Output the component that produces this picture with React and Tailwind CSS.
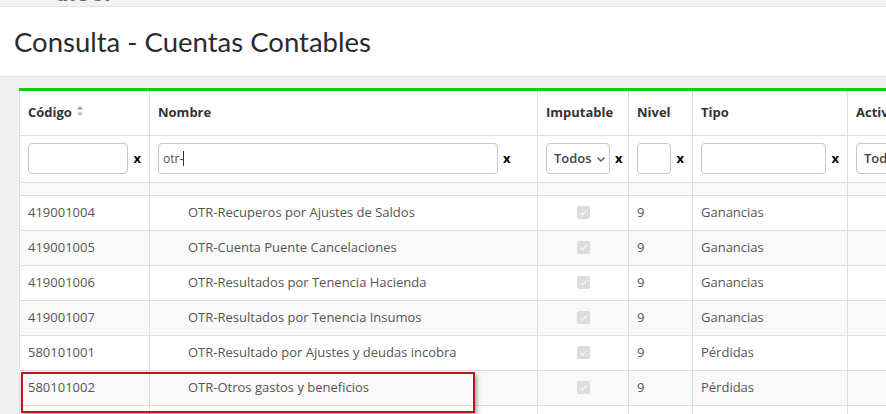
import React from "react";

const rows = [
  { code: "419001004", name: "OTR-Recuperos por Ajustes de Saldos", nivel: "9", tipo: "Ganancias" },
  { code: "419001005", name: "OTR-Cuenta Puente Cancelaciones", nivel: "9", tipo: "Ganancias" },
  { code: "419001006", name: "OTR-Resultados por Tenencia Hacienda", nivel: "9", tipo: "Ganancias" },
  { code: "419001007", name: "OTR-Resultados por Tenencia Insumos", nivel: "9", tipo: "Ganancias" },
  { code: "580101001", name: "OTR-Resultado por Ajustes y deudas incobra", nivel: "9", tipo: "Pérdidas" },
  { code: "580101002", name: "OTR-Otros gastos y beneficios", nivel: "9", tipo: "Pérdidas" },
  { code: "", name: "", nivel: "", tipo: "" },
];

const Clear = () => <span className="ml-[5px] text-[13px] font-bold text-black leading-none">x</span>;

const TextFilter = ({ width, value }) => (
  <div className="flex items-center">
    <div
      className={`${width} h-[31px] border border-[#c8c8c8] rounded-[4px] bg-white flex items-center px-[4px] text-[12px] text-[#555]`}
    >
      {value}
      {value && <span className="inline-block w-px h-[15px] bg-[#333]" />}
    </div>
    <Clear />
  </div>
);

const SelectFilter = ({ width }) => (
  <div className="flex items-center">
    <div
      className={`${width} h-[31px] border border-[#c8c8c8] rounded-[4px] bg-white flex items-center pl-[7px] pr-[3px] text-[13px] font-semibold text-[#444] overflow-hidden`}
    >
      <span className="flex-1 overflow-hidden whitespace-nowrap">Todos</span>
      <svg width="10" height="10" viewBox="0 0 10 10" className="shrink-0">
        <path d="M1.5 3.5 L5 7 L8.5 3.5" fill="none" stroke="#555" strokeWidth="1.4" />
      </svg>
    </div>
  </div>
);

const CheckDisabled = () => (
  <div className="w-[13px] h-[13px] rounded-[2px] bg-[#dcdcdc] flex items-center justify-center mx-auto">
    <svg width="9" height="9" viewBox="0 0 10 10">
      <path d="M1.5 5.2 L4 7.6 L8.6 2.4" fill="none" stroke="#f4f4f4" strokeWidth="1.6" />
    </svg>
  </div>
);

export default function App() {
  return (
    <div
      className="w-[886px] h-[414px] overflow-hidden bg-[#f1f1f1] text-[#555]"
      style={{ fontFamily: "'Open Sans', 'Liberation Sans', sans-serif" }}
    >
      {/* top strip with cut logo */}
      <div className="h-[7px] bg-[#f2f2f2] border-b border-[#e2e2e2] overflow-hidden">
        <div className="flex items-end ml-[51px] mt-[-17px] h-[22px]">
          <span className="w-[4px] h-[4px] rounded-full bg-[#22c822] mb-[6px] mr-[1px]" />
          <span
            className="text-[22px] font-bold text-[#666] leading-none tracking-[2px]"
            style={{ fontFamily: "Roboto, 'Liberation Sans', sans-serif" }}
          >
            aiser
          </span>
        </div>
      </div>

      {/* page header */}
      <div className="h-[70px] bg-white border-b border-[#e4e4e4] flex items-center pl-[14px]">
        <h1
          className="text-[27.5px] text-[#2b2b2b] font-normal leading-none"
          style={{ fontFamily: "Lato, 'Open Sans', sans-serif" }}
        >
          Consulta - Cuentas Contables
        </h1>
      </div>

      {/* table panel */}
      <div className="pt-[11px] pl-[19px]">
        <div className="relative w-[940px] bg-white border-t-[3px] border-[#0fd00f]">
          <table className="table-fixed border-collapse w-[940px] text-[13px]">
            <colgroup>
              <col className="w-[130px]" />
              <col className="w-[388px]" />
              <col className="w-[91px]" />
              <col className="w-[64px]" />
              <col className="w-[155px]" />
              <col className="w-[112px]" />
            </colgroup>
            <thead>
              <tr className="h-[44px] text-left text-[#333] font-bold">
                <th className="border border-t-0 border-[#dedede] px-[8px] font-bold">
                  <span className="inline-flex items-center">
                    Código
                    <svg width="8" height="12" viewBox="0 0 8 12" className="ml-[4px] mb-[3px]">
                      <path d="M4 1 L7 4.5 L1 4.5 Z" fill="#999" />
                      <path d="M4 11 L7 7.5 L1 7.5 Z" fill="#bbb" />
                    </svg>
                  </span>
                </th>
                <th className="border border-t-0 border-[#dedede] px-[8px] font-bold">Nombre</th>
                <th className="border border-t-0 border-[#dedede] px-[8px] font-bold">Imputable</th>
                <th className="border border-t-0 border-[#dedede] px-[8px] font-bold">Nivel</th>
                <th className="border border-t-0 border-[#dedede] px-[8px] font-bold">Tipo</th>
                <th className="border border-t-0 border-[#dedede] px-[8px] font-bold whitespace-nowrap overflow-hidden">Activo</th>
              </tr>
              <tr className="h-[47px]">
                <td className="border border-[#dedede] px-[8px]">
                  <TextFilter width="w-[103px]" />
                </td>
                <td className="border border-[#dedede] px-[8px]">
                  <TextFilter width="w-[340px]" value="otr-" />
                </td>
                <td className="border border-[#dedede] px-[8px]">
                  <div className="flex items-center">
                    <SelectFilter width="w-[64px]" />
                    <Clear />
                  </div>
                </td>
                <td className="border border-[#dedede] px-[8px]">
                  <TextFilter width="w-[38px]" />
                </td>
                <td className="border border-[#dedede] px-[8px]">
                  <TextFilter width="w-[129px]" />
                </td>
                <td className="border border-[#dedede] px-[8px]">
                  <SelectFilter width="w-[70px]" />
                </td>
              </tr>
            </thead>
            <tbody>
              <tr className="h-[13px] bg-[#f9f9f9]">
                <td className="border border-[#dedede]" />
                <td className="border border-[#dedede]" />
                <td className="border border-[#dedede]" />
                <td className="border border-[#dedede]" />
                <td className="border border-[#dedede]" />
                <td className="border border-[#dedede]" />
              </tr>
              {rows.map((r, i) => (
                <tr key={i} className={`h-[35px] ${i % 2 === 1 ? "bg-[#f9f9f9]" : "bg-white"}`}>
                  <td className="border border-[#dedede] px-[8px]">{r.code}</td>
                  <td className="border border-[#dedede] pl-[38px] pr-[8px] whitespace-nowrap overflow-hidden">{r.name}</td>
                  <td className="border border-[#dedede] px-[8px]">{r.code && <CheckDisabled />}</td>
                  <td className="border border-[#dedede] px-[8px]">{r.nivel}</td>
                  <td className="border border-[#dedede] px-[8px]">{r.tipo}</td>
                  <td className="border border-[#dedede] px-[8px]" />
                </tr>
              ))}
            </tbody>
          </table>

          {/* highlight annotation */}
          <div className="absolute left-[2px] top-[281px] w-[454px] h-[41px] border-2 border-[#c0141c] shadow-[2px_3px_4px_rgba(0,0,0,0.35)] pointer-events-none" />
        </div>
      </div>
    </div>
  );
}
